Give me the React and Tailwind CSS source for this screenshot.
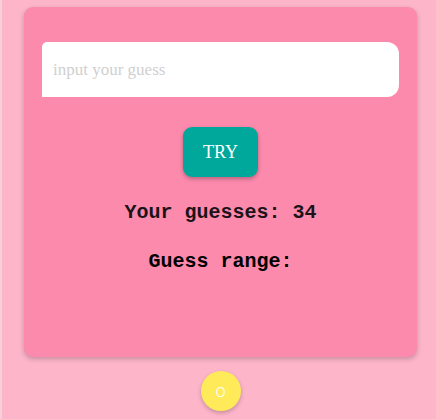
import React, { useState } from 'react';

const App = () => {
  const [guess, setGuess] = useState('');

  return (
    <div className="min-h-screen bg-[#fdb5ca] border-l-2 border-[#f4d0da] pt-[7px]">
      {/* Game Card */}
      <div className="ml-[22px] w-[393px] h-[350px] bg-[#fc8aad] rounded-[9px] shadow-[0_2px_5px_rgba(0,0,0,0.22)] px-[18px] pt-[35px] flex flex-col items-center">
        <input
          type="text"
          value={guess}
          onChange={(e) => setGuess(e.target.value)}
          placeholder="input your guess"
          className="w-full h-[55px] bg-white rounded-tl-[5px] rounded-tr-[12px] rounded-br-[12px] rounded-bl-none px-[11px] text-[17px] outline-none placeholder:text-[#d0d0d0] font-['Liberation_Serif',serif]"
        />

        <button className="mt-[30px] w-[75px] h-[50px] bg-[#00a89c] rounded-[9px] shadow-[0_2px_4px_rgba(0,0,0,0.28)] text-white text-[18px] font-['Liberation_Serif',serif]">
          TRY
        </button>

        <h2 className="mt-[24px] leading-[23px] text-[20px] font-bold text-[#1a1418] font-['Liberation_Mono',monospace]">
          Your guesses: 34
        </h2>
        <h2 className="mt-[26px] leading-[23px] text-[20px] font-bold text-black font-['Liberation_Mono',monospace]">
          Guess range:
        </h2>
      </div>

      {/* Reset Button */}
      <div className="ml-[22px] w-[393px] flex justify-center mt-[14px]">
        <button className="w-[40px] h-[40px] rounded-full bg-[#ffea5a] shadow-[0_2px_4px_rgba(0,0,0,0.22)] text-white text-[18px] font-light leading-none font-['Roboto',sans-serif]">
          o
        </button>
      </div>
    </div>
  );
};

export default App;
